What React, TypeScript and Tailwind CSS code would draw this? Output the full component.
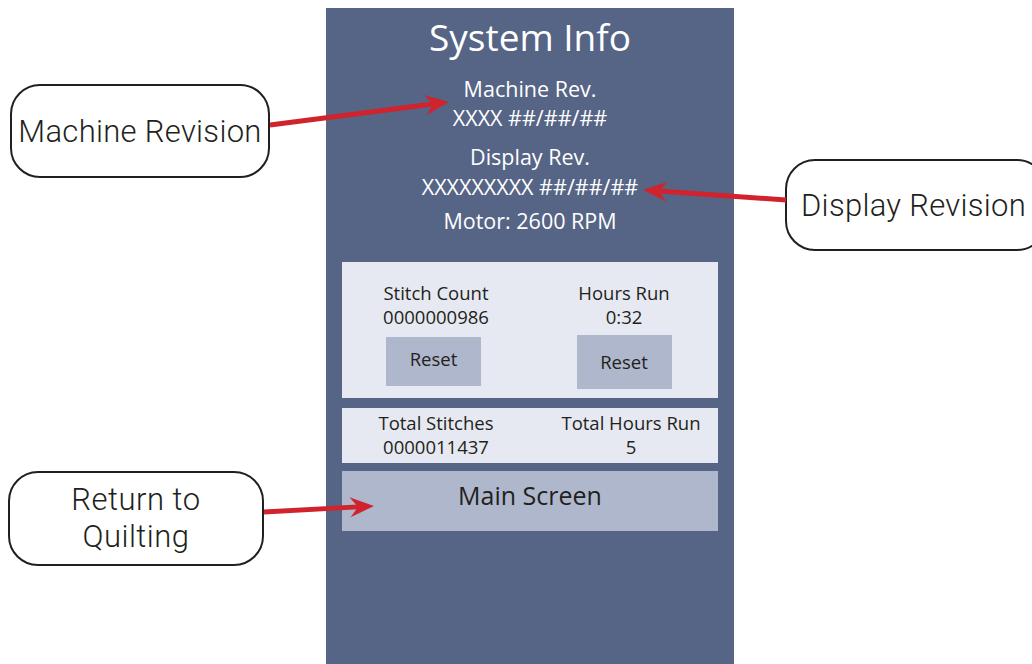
import React from "react";

type Pt = [number, number];

function Arrow({ from, to }: { from: Pt; to: Pt }) {
  const dx = to[0] - from[0];
  const dy = to[1] - from[1];
  const len = Math.hypot(dx, dy);
  const ux = dx / len;
  const uy = dy / len;
  const px = -uy;
  const py = ux;
  const L = 24;
  const W = 10;
  const N = 16;
  const bx = to[0] - ux * L;
  const by = to[1] - uy * L;
  const nx = to[0] - ux * N;
  const ny = to[1] - uy * N;
  const pts = [
    [to[0], to[1]],
    [bx + px * W, by + py * W],
    [nx, ny],
    [bx - px * W, by - py * W],
  ]
    .map((p) => `${p[0].toFixed(1)},${p[1].toFixed(1)}`)
    .join(" ");
  return (
    <g>
      <line x1={from[0]} y1={from[1]} x2={nx} y2={ny} stroke="#d1232d" strokeWidth={5} />
      <polygon points={pts} fill="#d1232d" />
    </g>
  );
}

const panelFont = { fontFamily: '"Open Sans", "Noto Sans", sans-serif' };
const calloutFont = { fontFamily: 'Roboto, "Noto Sans", sans-serif' };

function StatCol({ label, value, children }: { label: string; value: string; children?: React.ReactNode }) {
  return (
    <div className="flex flex-col items-center">
      <div className="text-[18.5px] leading-[24px]">{label}</div>
      <div className="text-[18.5px] leading-[24px]">{value}</div>
      {children}
    </div>
  );
}

export default function App() {
  return (
    <div className="relative w-[1032px] h-[664px] bg-white overflow-hidden">
      <div className="ml-[326px] pt-[8px]">
        <div
          className="w-[408px] h-[656px] bg-[#566486] text-white flex flex-col items-center"
          style={panelFont}
        >
          <div className="mt-[5px] text-[37px] leading-[48px]">System Info</div>
          <div className="mt-[13px] text-[21.5px] leading-[29px]">Machine Rev.</div>
          <div className="text-[21.5px] leading-[29px]">XXXX ##/##/##</div>
          <div className="mt-[10px] text-[21.5px] leading-[29px]">Display Rev.</div>
          <div className="mt-[1px] text-[21.5px] leading-[29px]">XXXXXXXXX ##/##/##</div>
          <div className="mt-[5px] text-[21.5px] leading-[29px]">Motor: 2600 RPM</div>

          <div className="mt-[27px] w-[376px] h-[136px] bg-[#e6e9f1] text-[#231f20] grid grid-cols-2 pt-[19px]">
            <StatCol label="Stitch Count" value="0000000986">
              <div className="mt-[8px] w-[95px] h-[49px] bg-[#aeb7cb] flex items-start justify-center pt-[10px] text-[18.5px] leading-[24px] -ml-[5px]">
                Reset
              </div>
            </StatCol>
            <StatCol label="Hours Run" value="0:32">
              <div className="mt-[6px] w-[95px] h-[54px] bg-[#aeb7cb] flex items-start justify-center pt-[15px] text-[18.5px] leading-[24px]">
                Reset
              </div>
            </StatCol>
          </div>

          <div className="mt-[10px] w-[376px] h-[55px] bg-[#e6e9f1] text-[#231f20] grid grid-cols-2 pt-[3px]">
            <StatCol label="Total Stitches" value="0000011437" />
            <div className="pl-[14px]">
              <StatCol label="Total Hours Run" value="5" />
            </div>
          </div>

          <div className="mt-[8px] w-[376px] h-[60px] bg-[#aeb7cb] text-[#231f20] flex justify-center pt-[9px] text-[25px] leading-[30px]">
            Main Screen
          </div>
        </div>
      </div>

      <div
        className="absolute left-[10px] top-[84px] w-[260px] h-[94px] border-2 border-[#231f20] rounded-[30px] bg-white flex items-center justify-center text-[31px] leading-[37px] tracking-[0.3px] font-light text-[#231f20]"
        style={calloutFont}
      >
        Machine Revision
      </div>
      <div
        className="absolute left-[785px] top-[159px] w-[262px] h-[92px] border-2 border-[#231f20] rounded-[30px] bg-white flex items-center pl-[14px] text-[31px] leading-[37px] tracking-[0.3px] font-light text-[#231f20]"
        style={calloutFont}
      >
        Display Revision
      </div>
      <div
        className="absolute left-[8px] top-[471px] w-[256px] h-[95px] border-2 border-[#231f20] rounded-[30px] bg-white flex flex-col items-center justify-center text-[31px] leading-[36.5px] tracking-[0.5px] font-light text-[#231f20]"
        style={calloutFont}
      >
        <span>Return to</span>
        <span>Quilting</span>
      </div>

      <svg className="absolute inset-0 pointer-events-none" width={1032} height={664}>
        <Arrow from={[270, 125]} to={[449, 102]} />
        <Arrow from={[786, 200]} to={[643, 190]} />
        <Arrow from={[264, 512]} to={[374, 506]} />
      </svg>
    </div>
  );
}
